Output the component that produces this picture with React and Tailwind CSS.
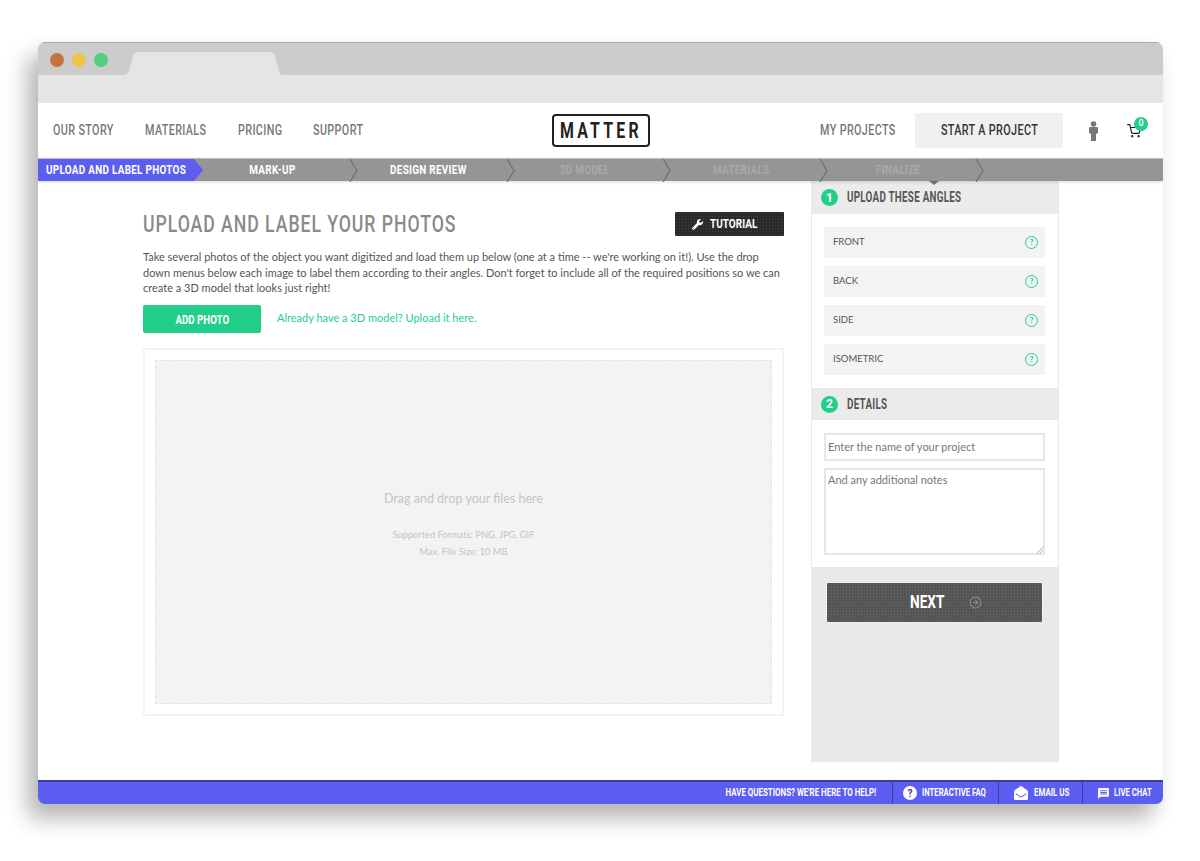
import React from "react";
import { FaWrench, FaEnvelopeOpen } from "react-icons/fa";
import { MdMessage } from "react-icons/md";
import { FiArrowRightCircle, FiShoppingCart } from "react-icons/fi";

const din = "font-['Roboto',sans-serif]";
const body = "font-['Lato','Open_Sans',sans-serif]";
const dots = "bg-[radial-gradient(rgba(255,255,255,0.12)_0.6px,transparent_0.6px)] bg-[length:3px_3px]";

function Chevron() {
  return (
    <svg className="absolute right-[-9px] top-0" width="10" height="23" viewBox="0 0 10 23">
      <path d="M1 0 L8 11.5 L1 23" fill="none" stroke="#6f6f6f" strokeWidth="1.2" />
    </svg>
  );
}

function Step({ label, muted }) {
  return (
    <div className={`relative w-[156.4px] h-full flex items-center justify-center text-[13px] font-bold tracking-[0.4px] ${muted ? "text-[#a9a9a9]" : "text-white"}`}>
      <span className="inline-block whitespace-nowrap scale-x-[0.76]">{label}</span>
      <Chevron />
    </div>
  );
}

function Angle({ label }) {
  return (
    <div className="h-[31px] bg-[#f3f3f3] flex items-center justify-between pl-[9px] pr-[7px]">
      <span className={`${body} text-[9.5px] text-[#555555]`}>{label}</span>
      <span className={`w-[13px] h-[13px] mb-[1px] rounded-full border border-[#22cf8a] text-[#22cf8a] text-[8px] font-bold flex items-center justify-center ${body}`}>?</span>
    </div>
  );
}

function SectionHead({ n, label, tall }) {
  return (
    <div className={`${tall ? "h-[33px]" : "h-[32px]"} bg-[#ebebeb] flex items-center pl-[10px] gap-[9px]`}>
      <span className="w-[17px] h-[17px] shrink-0 rounded-full bg-[#22cf8a] text-white text-[12px] font-bold flex items-center justify-center">{n}</span>
      <span className="inline-block whitespace-nowrap origin-left scale-x-[0.7] tracking-[0.4px] text-[14px] font-bold text-[#555555]">{label}</span>
    </div>
  );
}

export default function App() {
  return (
    <div className={`w-[1200px] h-[861px] bg-white pt-[42px] pl-[38px] overflow-hidden ${din}`}>
      <div className="w-[1125px] h-[762px] rounded-[7px] flex flex-col bg-white shadow-[-10px_14px_22px_rgba(0,0,0,0.3)] overflow-hidden">
        {/* tab strip */}
        <div className="h-[33px] shrink-0 bg-[#cccccc] border-t border-[#a9a9a9] flex items-end">
          <div className="flex gap-[8px] pl-[12px] pb-[8px]">
            <span className="w-[14px] h-[14px] rounded-full bg-[#c4753c]" />
            <span className="w-[14px] h-[14px] rounded-full bg-[#eec643]" />
            <span className="w-[14px] h-[14px] rounded-full bg-[#4fcf80]" />
          </div>
          <svg className="ml-[15px]" width="160" height="23" viewBox="0 0 160 23">
            <path d="M0 23 Q5 23 6 19 L10 4 Q11 0 15 0 L147 0 Q151 0 152 4 L156 19 Q157 23 160 23 Z" fill="#e5e5e5" />
          </svg>
        </div>
        <div className="h-[28px] shrink-0 bg-[#e5e5e5]" />

        {/* nav */}
        <div className="h-[55px] shrink-0 flex items-center pl-[15px] text-[#777777] text-[15px] font-medium tracking-[0.5px]">
          <div className="w-[499px] flex">
            <span className="w-[92px] whitespace-nowrap inline-block origin-left scale-x-[0.72]">OUR STORY</span>
            <span className="w-[93px] whitespace-nowrap inline-block origin-left scale-x-[0.72]">MATERIALS</span>
            <span className="w-[75px] whitespace-nowrap inline-block origin-left scale-x-[0.72]">PRICING</span>
            <span className="whitespace-nowrap inline-block origin-left scale-x-[0.72]">SUPPORT</span>
          </div>
          <div className="w-[98px] h-[33px] shrink-0 border-[2.5px] border-[#222222] rounded-[4px] flex items-center justify-center text-[#222222] text-[22px] font-bold tracking-normal">
            <span className="inline-block whitespace-nowrap tracking-[4.5px] scale-x-[0.72]">MATTER</span>
          </div>
          <span className="ml-[170px] w-[95px] shrink-0 whitespace-nowrap inline-block origin-left scale-x-[0.72]">MY PROJECTS</span>
          <div className="w-[148px] h-[35px] shrink-0 rounded-[2px] bg-[#f0f0f0] text-[#333333] flex items-center justify-center">
            <span className="inline-block whitespace-nowrap scale-x-[0.72]">START A PROJECT</span>
          </div>
          <svg className="ml-[25px] shrink-0" width="11" height="20" viewBox="0 0 11 20" fill="#777777">
            <circle cx="5.5" cy="3" r="2.8" />
            <path d="M1 7 Q1 6 2 6 H9 Q10 6 10 7 V12 L8 13 V20 H3 V13 L1 12 Z" />
          </svg>
          <div className="relative ml-[28px] shrink-0">
            <FiShoppingCart className="text-[#222222]" size={14} />
            <span className="absolute -top-[7px] left-[7px] w-[14px] h-[14px] rounded-full bg-[#22cf8a] text-white text-[9px] tracking-normal flex items-center justify-center">0</span>
          </div>
        </div>

        {/* stepper */}
        <div className="h-[23px] shrink-0 bg-[#959595] border-t border-[#bdbdbd] flex relative z-10 shadow-[0_1px_3px_rgba(0,0,0,0.15)]">
          <div className="relative w-[156px] h-full bg-[#5b5ef0] text-white text-[13px] font-bold tracking-[0.4px] flex items-center pl-[8px]">
            <span className="inline-block whitespace-nowrap origin-left scale-x-[0.76]">UPLOAD AND LABEL PHOTOS</span>
            <svg className="absolute left-[156px] top-0" width="9" height="22" viewBox="0 0 9 22">
              <path d="M0 0 L9 11 L0 22 Z" fill="#5b5ef0" />
            </svg>
          </div>
          <Step label="MARK-UP" />
          <Step label="DESIGN REVIEW" />
          <Step label="3D MODEL" muted />
          <Step label="MATERIALS" muted />
          <Step label="FINALIZE" muted />
        </div>

        {/* content */}
        <div className="flex-1 flex pl-[105px] min-h-0">
          <div className="w-[641px] pt-[31px]">
            <div className="flex items-center justify-between h-[24px]">
              <h1 className="pt-[3px] text-[23px] font-medium text-[#8a8a8a] tracking-[1.2px] whitespace-nowrap inline-block origin-left scale-x-[0.77]">UPLOAD AND LABEL YOUR PHOTOS</h1>
              <div className={`w-[109px] h-[24px] bg-[#2a2a2a] ${dots} text-white text-[13px] font-bold flex items-center pl-[17px] gap-[7px] rounded-[1px]`}>
                <FaWrench size={11} className="shrink-0" />
                <span className="inline-block whitespace-nowrap origin-left scale-x-[0.77]">TUTORIAL</span>
              </div>
            </div>
            <p className={`${body} mt-[13px] text-[11px] leading-[15.6px] text-[#555555]`}>
              Take several photos of the object you want digitized and load them up below (one at a time -- we're working on it!). Use the drop down menus below each image to label them according to their angles. Don't forget to include all of the required positions so we can create a 3D model that looks just right!
            </p>
            <div className="mt-[9px] flex items-center">
              <div className="w-[118px] h-[28px] rounded-[2px] bg-[#22cf8a] text-white text-[13.5px] font-bold flex items-center justify-center">
                <span className="inline-block whitespace-nowrap scale-x-[0.72]">ADD PHOTO</span>
              </div>
              <span className={`${body} ml-[16px] pb-[2px] text-[11px] text-[#22cf8a]`}>Already have a 3D model? Upload it here.</span>
            </div>
            <div className="mt-[15px] h-[368px] border-2 border-[#f3f3f3] p-[10px]">
              <div className={`${body} h-full bg-[#f3f3f3] border border-dashed border-[#e2e2e2] flex flex-col items-center pt-[129px] text-[#c4c4c4]`}>
                <span className="text-[12.5px]">Drag and drop your files here</span>
                <span className="mt-[19px] text-[9.3px]">Supported Formats: PNG, JPG, GIF</span>
                <span className="mt-[4px] text-[9.3px]">Max. File Size: 10 MB</span>
              </div>
            </div>
          </div>

          <div className="relative ml-[27px] w-[248px] h-[581px] bg-[#e9e9e9] flex flex-col">
            <svg className="absolute left-[118px] top-0" width="10" height="4" viewBox="0 0 10 4">
              <path d="M0 0 H10 L5 4 Z" fill="#777777" />
            </svg>
            <SectionHead n="1" label="UPLOAD THESE ANGLES" tall />
            <div className="h-[174px] mx-px bg-white pl-[12px] pr-[13px] pt-[13px] flex flex-col gap-[8px]">
              <Angle label="FRONT" />
              <Angle label="BACK" />
              <Angle label="SIDE" />
              <Angle label="ISOMETRIC" />
            </div>
            <SectionHead n="2" label="DETAILS" />
            <div className={`${body} h-[147px] mx-px bg-white pl-[12px] pr-[13px] pt-[13px] text-[11px] text-[#777777]`}>
              <div className="h-[28px] border-2 border-[#e6e6e6] flex items-center pl-[2px]">Enter the name of your project</div>
              <div className="relative mt-[7px] h-[87px] border-2 border-[#e6e6e6] pl-[2px] pt-[2px]">
                And any additional notes
                <svg className="absolute right-0 bottom-0" width="7" height="7" viewBox="0 0 7 7">
                  <path d="M1 7 L7 1 M4 7 L7 4" stroke="#999999" strokeWidth="0.8" />
                </svg>
              </div>
            </div>
            <div className={`mt-[15px] ml-[15px] w-[217px] h-[41px] rounded-[2px] bg-[#555555] ${dots} border border-[#f2f2f2] flex items-center pl-[83px] pb-[2px] text-white text-[18px] font-bold`}>
              <span className="w-[47px] inline-block origin-left scale-x-[0.76]">NEXT</span>
              <FiArrowRightCircle className="ml-[12px] mt-[2px] text-[#8a8a8a] shrink-0" size={13} />
            </div>
          </div>
        </div>

        {/* footer */}
        <div className="h-[24px] shrink-0 bg-[#5b5ef0] border-t-2 border-[#3f3d9c] flex items-center justify-end text-white text-[11px] font-bold">
          <span className="mr-[16px] inline-block whitespace-nowrap origin-right scale-x-[0.72]">HAVE QUESTIONS? WE'RE HERE TO HELP!</span>
          <div className="h-full w-[106px] shrink-0 border-l border-[#3f3d9c] flex items-center pl-[10px] gap-[5px]">
            <span className="w-[14px] h-[14px] shrink-0 rounded-full bg-white text-[#3f3d9c] text-[10px] flex items-center justify-center">?</span>
            <span className="inline-block whitespace-nowrap origin-left scale-x-[0.7]">INTERACTIVE FAQ</span>
          </div>
          <div className="h-full w-[84px] shrink-0 border-l border-[#3f3d9c] flex items-center pl-[15px] gap-[6px]">
            <FaEnvelopeOpen size={14} className="shrink-0" />
            <span className="inline-block whitespace-nowrap origin-left scale-x-[0.72]">EMAIL US</span>
          </div>
          <div className="h-full w-[81px] shrink-0 border-l border-[#3f3d9c] flex items-center pl-[14px] gap-[4px]">
            <MdMessage size={13} className="shrink-0" />
            <span className="inline-block whitespace-nowrap origin-left scale-x-[0.7]">LIVE CHAT</span>
          </div>
        </div>
      </div>
    </div>
  );
}
